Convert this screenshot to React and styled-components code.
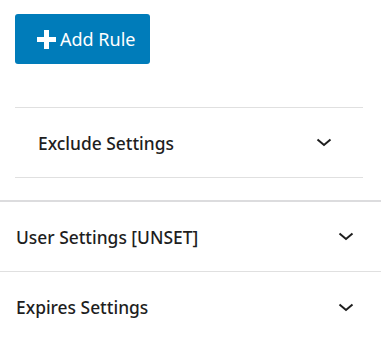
import React from "react"
import styled, { createGlobalStyle } from "styled-components"

const GlobalStyle = createGlobalStyle`
  * {
    margin: 0;
    padding: 0;
    box-sizing: border-box;
  }
  body {
    background: #fff;
    font-family: "Noto Sans", "Open Sans", sans-serif;
    color: #1e1e1e;
  }
`

const Page = styled.div`
  width: 381px;
`

const Top = styled.div`
  padding: 14px 18px 22px 15px;
`

const AddButton = styled.button`
  display: flex;
  align-items: center;
  gap: 4px;
  height: 50px;
  width: 135px;
  padding: 0 0 0 22px;
  background: #007cba;
  color: #fff;
  border: none;
  border-radius: 3px;
  font-family: "Noto Sans", sans-serif;
  font-size: 18px;
  cursor: pointer;
`

const InnerPanel = styled.div`
  margin-top: 43px;
  border-top: 1px solid #e0e0e0;
  border-bottom: 1px solid #e0e0e0;
`

const Row = styled.div`
  display: flex;
  align-items: center;
  justify-content: space-between;
  height: ${p => p.$h || 70}px;
  padding: 0 ${p => p.$right}px 0 ${p => p.$left}px;
  border-bottom: ${p => (p.$line ? "1px solid #e0e0e0" : "none")};
`

const Title = styled.span`
  font-size: 17.4px;
  font-weight: 500;
  letter-spacing: 0;
`

const Body = styled.div`
  border-top: 2px solid #dcdcde;
`

const Plus = () => (
  <svg width="19" height="19" viewBox="0 0 19 19">
    <rect x="7" y="0" width="5" height="19" fill="#fff" />
    <rect x="0" y="7" width="19" height="5" fill="#fff" />
  </svg>
)

const Chevron = () => (
  <svg width="16" height="9" viewBox="0 0 16 9">
    <polyline points="1.5,1.5 8,7 14.5,1.5" fill="none" stroke="#1e1e1e" strokeWidth="2" />
  </svg>
)

export default function App() {
  return (
    <Page>
      <GlobalStyle />
      <Top>
        <AddButton>
          <Plus />
          Add Rule
        </AddButton>
        <InnerPanel>
          <Row $h={69} $left={23} $right={31}>
            <Title>Exclude Settings</Title>
            <Chevron />
          </Row>
        </InnerPanel>
      </Top>
      <Body>
        <Row $left={16} $right={27} $line>
          <Title>User Settings [UNSET]</Title>
          <Chevron />
        </Row>
        <Row $left={16} $right={27}>
          <Title>Expires Settings</Title>
          <Chevron />
        </Row>
      </Body>
    </Page>
  )
}
